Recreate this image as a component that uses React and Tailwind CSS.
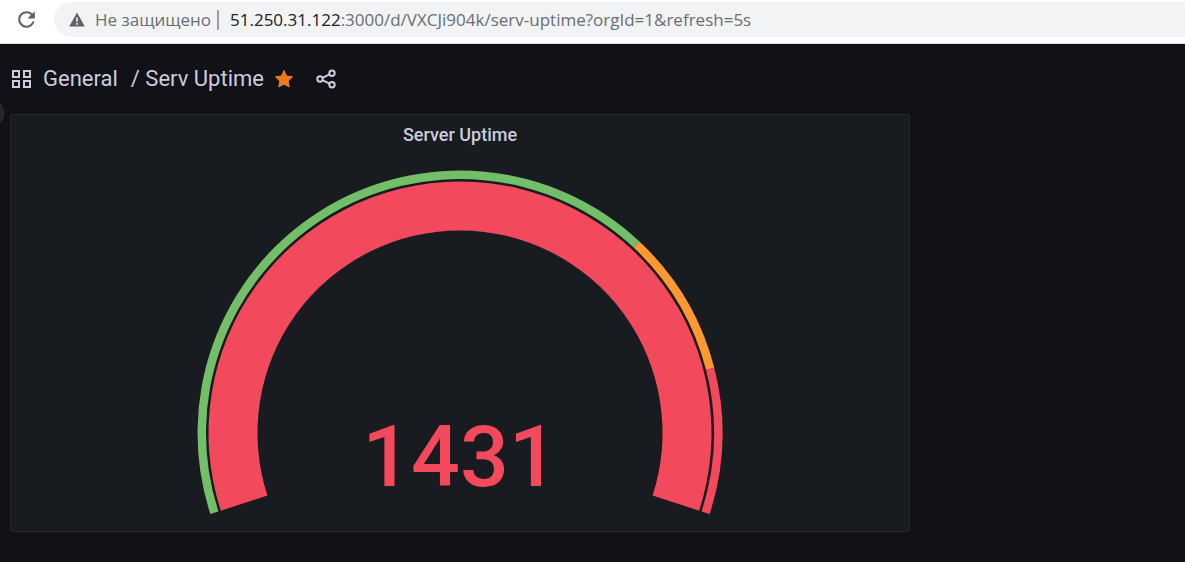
import React from "react";

const CENTER = { x: 263, y: 263 };

function point(radius, degrees) {
  const angle = (degrees * Math.PI) / 180;
  return `${(CENTER.x + radius * Math.cos(angle)).toFixed(2)} ${(CENTER.y - radius * Math.sin(angle)).toFixed(2)}`;
}

// Ring segment drawn clockwise between two shares of the 216 degree scale.
function arc(outer, inner, start, end) {
  const from = 198 - 216 * start;
  const to = 198 - 216 * end;
  const large = from - to > 180 ? 1 : 0;
  return `M${point(outer, from)}A${outer} ${outer} 0 ${large} 1 ${point(outer, to)}L${point(inner, to)}A${inner} ${inner} 0 ${large} 0 ${point(inner, from)}Z`;
}

function Gauge({ value }) {
  return (
    <svg viewBox="0 0 526 345" className="h-auto w-full max-w-[526px]" role="img" aria-label="Server Uptime">
      <path d={arc(251.5, 202.5, 0, 1)} fill="#f2495c" />
      <path d={arc(262.5, 254, 0, 0.7)} fill="#73bf69" />
      <path d={arc(262.5, 254, 0.7, 0.85)} fill="#ff9830" />
      <path d={arc(262.5, 254, 0.85, 1)} fill="#f2495c" />
      <text x="263" y="316" textAnchor="middle" fill="#f2495c" className="font-['Roboto',sans-serif] text-[86px] font-medium">
        {value}
      </text>
    </svg>
  );
}

function BrowserBar() {
  return (
    <header className="flex h-11 items-center border-b border-[#dadce0] bg-white pl-3.5 font-['Open_Sans',sans-serif]">
      <button type="button" aria-label="Reload" className="mb-1 shrink-0">
        <svg viewBox="0 0 24 24" className="h-[25px] w-[25px]" fill="#5f6368">
          <path d="M17.65 6.35A7.96 7.96 0 0 0 12 4a8 8 0 1 0 7.73 10h-2.08A6 6 0 1 1 12 6c1.66 0 3.14.69 4.22 1.78L13 11h7V4z" />
        </svg>
      </button>
      <div className="mb-1 ml-[15px] flex h-[35px] min-w-0 flex-1 items-center overflow-hidden rounded-l-full bg-[#f1f3f4] pl-[15px] text-[17px] whitespace-nowrap text-[#6b6e72]">
        <svg viewBox="0 0 16 15" className="h-[15px] w-4 shrink-0" aria-hidden="true">
          <path d="M8 0.5 15.8 14.5H.2Z" fill="#5f6368" />
          <path d="M7.2 5.5h1.6v4.2H7.2zM7.2 11h1.6v1.7H7.2z" fill="#f1f3f4" />
        </svg>
        <span className="ml-2.5">Не защищено</span>
        <span className="mr-[11px] ml-1.5 h-5 w-0.5 shrink-0 bg-[#9aa0a6]" />
        <a href="#dashboard">
          <span className="text-[#202124]">51.250.31.122</span>:3000/d/VXCJi904k/serv-uptime?orgId=1&amp;refresh=5s
        </a>
      </div>
    </header>
  );
}

function Toolbar() {
  return (
    <nav className="flex h-[70px] items-center pl-[11px] font-['Roboto',sans-serif] text-[22px] text-[#ccccdc]">
      <svg viewBox="0 0 21 20" className="h-5 w-[21px]" fill="none" stroke="#ccccdc" strokeWidth="2" aria-hidden="true">
        <path d="M2 2h6v6H2zM13 2h6v6h-6zM2 12h6v6H2zM13 12h6v6h-6z" />
      </svg>
      <div className="ml-[11px] flex gap-[13px] pb-0.5">
        <a href="#general">General</a>
        <a href="#serv-uptime">/ Serv Uptime</a>
      </div>
      <button type="button" aria-label="Unmark as favorite" className="ml-2.5">
        <svg viewBox="0 0 20 20" className="h-5 w-5" fill="#eb7b18" stroke="#eb7b18" strokeWidth="1" strokeLinejoin="round">
          <path d="M10 1.5 12.6 7l6 .8-4.4 4.2 1.1 6L10 15.1 4.7 18l1.1-6L1.4 7.8l6-.8Z" />
        </svg>
      </button>
      <button type="button" aria-label="Share dashboard" className="ml-[22px]">
        <svg viewBox="0 0 20 20" className="h-5 w-5" fill="none" stroke="#ccccdc" strokeWidth="2">
          <circle cx="4" cy="10" r="2.7" />
          <circle cx="16" cy="4.2" r="2.7" />
          <circle cx="16" cy="15.8" r="2.7" />
          <path d="M6.5 8.8 13.5 5.4M6.5 11.2 13.5 14.6" />
        </svg>
      </button>
    </nav>
  );
}

export default function App() {
  return (
    <div className="flex min-h-screen flex-col bg-[#111217]">
      <BrowserBar />
      <main className="relative flex-1 overflow-hidden">
        <Toolbar />
        <button
          type="button"
          aria-label="Expand menu"
          className="absolute top-[53px] -left-7 h-8 w-8 rounded-full border border-[#2d2f34] bg-[#22252b]"
        />
        <div className="px-2.5 pb-7">
          <section className="flex w-full max-w-[900px] flex-col items-center rounded-[3px] border border-[#25272c] bg-[#181b1f] px-4 pb-4">
            <h2 className="h-[55px] pt-1.5 font-['Roboto',sans-serif] text-lg font-medium text-[#ccccdc]">Server Uptime</h2>
            <Gauge value={1431} />
          </section>
        </div>
      </main>
    </div>
  );
}
